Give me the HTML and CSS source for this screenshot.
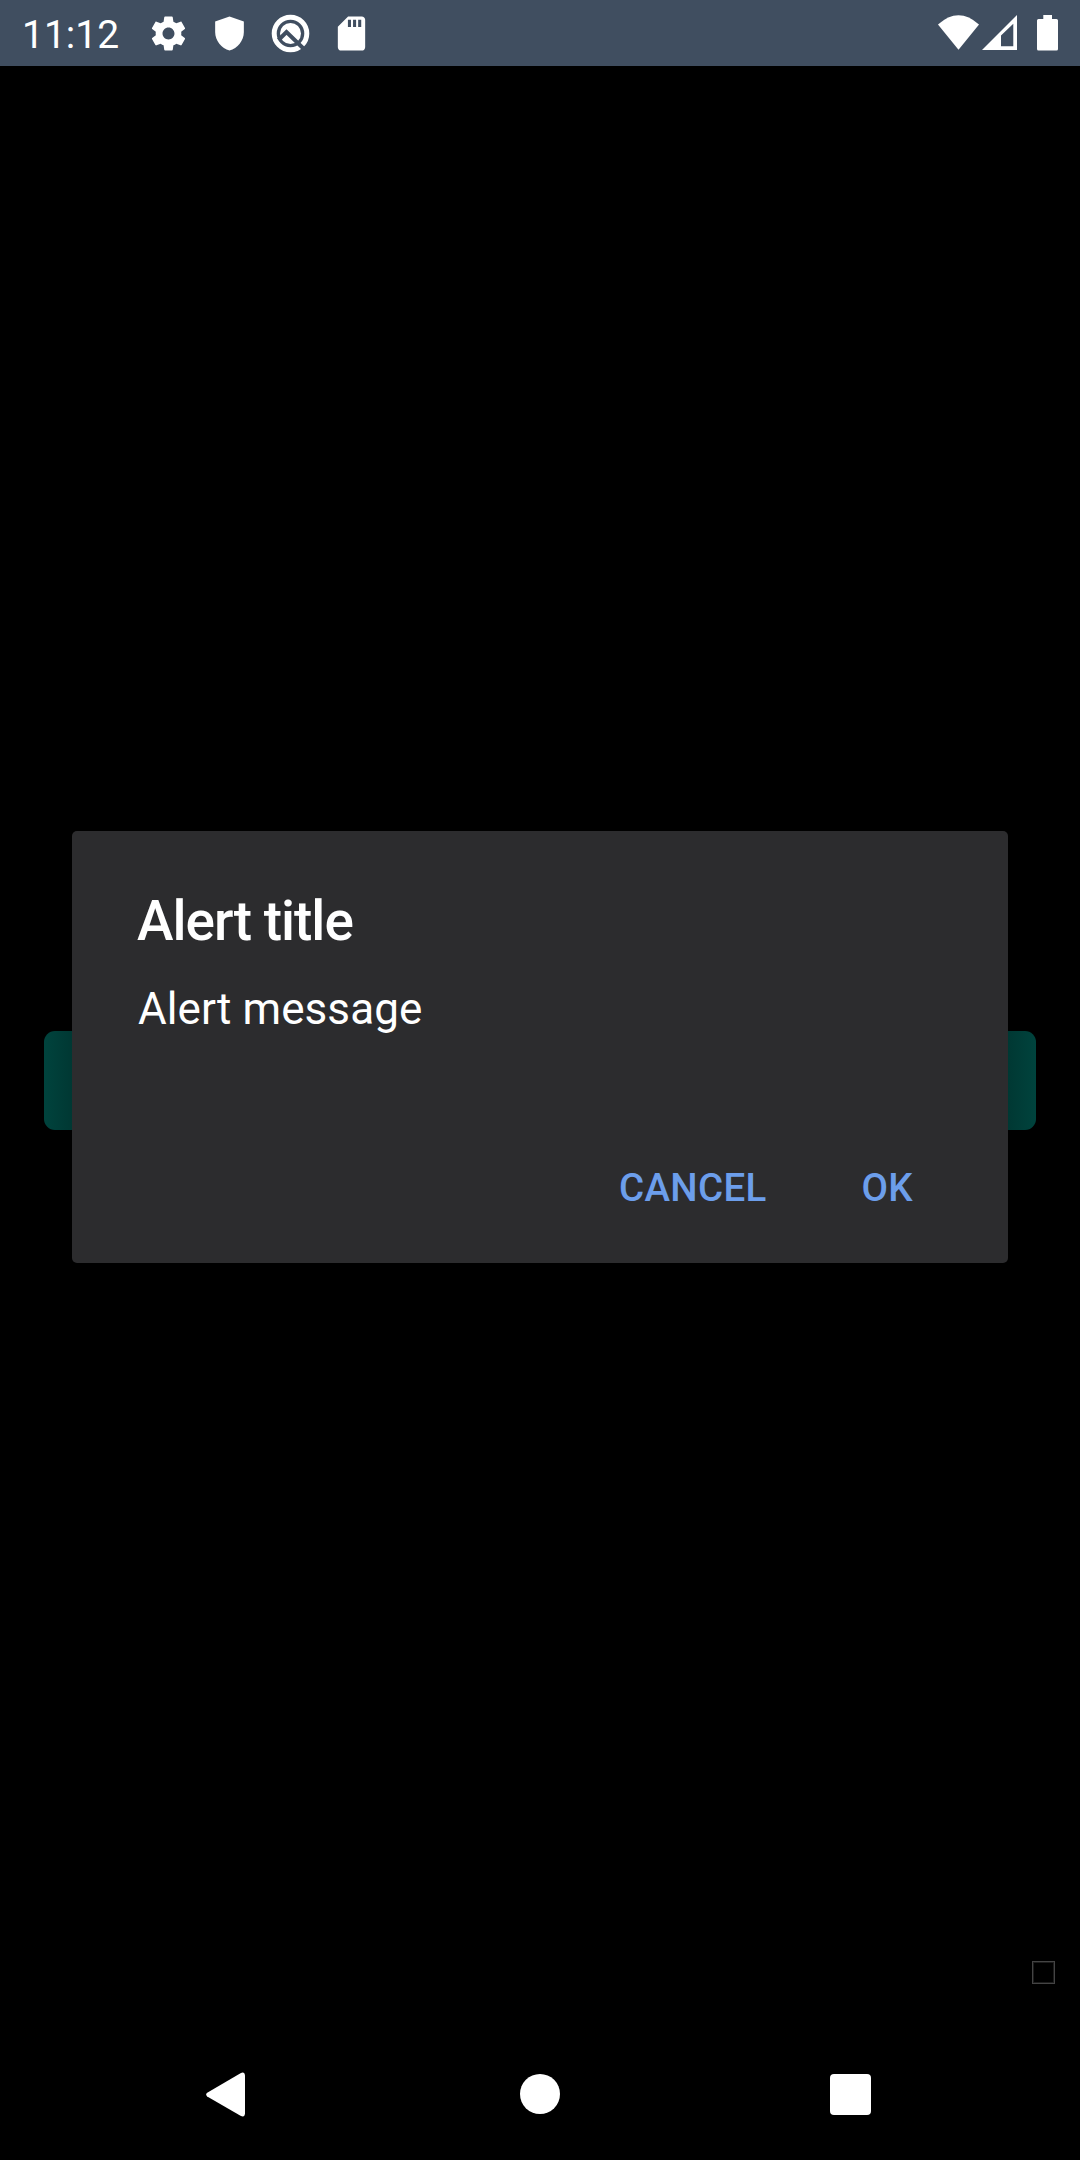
FILE: index.html
```html
<!DOCTYPE html>
<html lang="en">
<head>
<meta charset="utf-8">
<title>Alert</title>
<link rel="stylesheet" href="styles.css">
</head>
<body>
<div class="screen">
  <header class="status">
    <span class="clock">11:12</span>
    <div class="notifications">
      <svg class="note" viewBox="0 0 24 24"><path d="M19.43 12.98c.04-.32.07-.64.07-.98s-.03-.66-.07-.98l2.11-1.65c.19-.15.24-.42.12-.64l-2-3.46c-.12-.22-.39-.3-.61-.22l-2.49 1c-.52-.4-1.08-.73-1.69-.98l-.38-2.65C14.46 2.18 14.25 2 14 2h-4c-.25 0-.46.18-.49.42l-.38 2.65c-.61.25-1.17.59-1.69.98l-2.49-1c-.23-.09-.49 0-.61.22l-2 3.46c-.13.22-.07.49.12.64l2.11 1.65c-.04.32-.07.65-.07.98s.03.66.07.98l-2.11 1.65c-.19.15-.24.42-.12.64l2 3.46c.12.22.39.3.61.22l2.49-1c.52.4 1.08.73 1.69.98l.38 2.65c.03.24.24.42.49.42h4c.25 0 .46-.18.49-.42l.38-2.65c.61-.25 1.17-.59 1.69-.98l2.49 1c.23.09.49 0 .61-.22l2-3.46c.12-.22.07-.49-.12-.64l-2.11-1.65zM12 15.5c-1.93 0-3.5-1.57-3.5-3.5s1.57-3.5 3.5-3.5 3.5 1.57 3.5 3.5-1.57 3.5-3.5 3.5z"/></svg>
      <svg class="note" viewBox="0 0 24 24"><path d="M12 2 3.6 5v6.1c0 5 3.7 9.7 8.4 10.9 4.700-1.200 8.400-5.900 8.400-10.900V5z"/></svg>
      <svg class="note" viewBox="0 0 41 41">
        <circle class="ring" cx="20.500" cy="20.500" r="16.300"/>
        <circle cx="20.500" cy="20.500" r="10.500"/>
        <path class="cut" d="M8.500 27 16.500 19 35.500 37.500"/>
      </svg>
      <svg class="note" viewBox="0 0 24 24"><path d="M18 2h-8L4 8v12c0 1.100.9 2 2 2h12c1.100 0 2-.9 2-2V4c0-1.100-.9-2-2-2zm-6.300 6.200H9.900V4h1.800zm3 0h-1.800V4h1.800zm3 0h-1.800V4h1.800z"/></svg>
    </div>
    <div class="system">
      <svg class="wifi" viewBox="0 0 41 36"><path d="M0 9.500Q20.500-9 41 9.500L20.500 34.800z"/></svg>
      <svg class="signal" viewBox="0 0 35 36"><path fill-rule="evenodd" d="M0 35 35 0V35zM19 20.500V31.300H31.300V8.800z"/></svg>
      <svg class="battery" viewBox="0 0 21 36"><path d="M6.300 0h8.700v4H19.500Q21 4 21 5.500V34Q21 35.600 19.500 35.600H1.500Q0 35.600 0 34V5.500Q0 4 1.500 4H6.300z"/></svg>
    </div>
  </header>
  <main class="content">
    <div class="action"></div>
    <div class="overlay">
      <section class="dialog" role="alertdialog">
        <h1 class="title">Alert title</h1>
        <p class="message">Alert message</p>
        <div class="buttons">
          <span class="button">CANCEL</span>
          <span class="button">OK</span>
        </div>
      </section>
    </div>
    <div class="marker"></div>
  </main>
  <nav class="navbar">
    <svg class="nav back" viewBox="0 0 40 46"><path d="M1.200 20.800 34.500 1.200Q38.600-.8 39 3.500V41.500Q38.600 46 34.500 43.800L1.200 24.500Q-.8 22.500 1.200 20.800z"/></svg>
    <span class="nav home"></span>
    <span class="nav recents"></span>
  </nav>
</div>
</body>
</html>
```
FILE: styles.css
```css
body {
  margin: 0;
  background: #000;
  font-family: Roboto, "Liberation Sans", sans-serif;
  color: #fff;
}
.screen {
  display: flex;
  flex-direction: column;
  width: 1080px;
  height: 2160px;
}
svg {
  display: block;
  fill: #fff;
}
.status {
  display: flex;
  align-items: center;
  box-sizing: border-box;
  height: 66px;
  padding: 0 22px;
  background: #404e60;
}
.clock {
  width: 126px;
  font-size: 39px;
  line-height: 46px;
  padding-top: 4px;
}
.notifications {
  display: flex;
  gap: 20px;
}
.note {
  width: 41px;
  height: 41px;
}
.ring {
  fill: none;
  stroke: #fff;
  stroke-width: 5;
}
.cut {
  fill: none;
  stroke: #404e60;
  stroke-width: 4;
}
.system {
  display: flex;
  margin-left: auto;
}
.wifi { width: 41px; height: 36px; }
.signal { width: 35px; height: 36px; margin-left: 3px; }
.battery { width: 21px; height: 36px; margin-left: 20px; }
.content {
  position: relative;
  flex: 1;
  display: flex;
  flex-direction: column;
}
.action {
  height: 99px;
  margin: 965px 44px 0;
  border-radius: 11px;
  background: linear-gradient(90deg, #00433d, #003833 28px, #003833 964px, #00433d);
}
.overlay {
  position: absolute;
  inset: 765px 72px auto;
}
.dialog {
  display: flex;
  flex-direction: column;
  box-sizing: border-box;
  height: 432px;
  padding: 58px 66px 0;
  border-radius: 5px;
  background: #2c2c2e;
}
.title {
  margin: 0 0 0 -1px;
  font-size: 55px;
  font-weight: 500;
  line-height: 64px;
  letter-spacing: -1px;
}
.message {
  margin: 30px 0 0;
  font-size: 44px;
  line-height: 52px;
  letter-spacing: 0.080px;
}
.buttons {
  display: flex;
  justify-content: flex-end;
  gap: 95px;
  margin-top: 130px;
  padding-right: 29px;
}
.button {
  font-size: 38.500px;
  font-weight: 500;
  line-height: 45px;
  letter-spacing: 0.300px;
  color: #6c9eeb;
}
.marker {
  box-sizing: border-box;
  width: 23px;
  height: 23px;
  margin: auto 25px 44px auto;
  border: 1px solid #444;
  box-shadow: inset 0 0 0 1px #1c1c1c;
}
.navbar {
  display: flex;
  align-items: center;
  box-sizing: border-box;
  height: 132px;
  padding: 1px 0 0 206px;
}
.back { width: 40px; height: 46px; }
.home { width: 40px; height: 40px; margin: 0 0 1px 274px; border-radius: 50%; background: #fff; }
.recents { width: 41px; height: 41px; margin-left: 270px; border-radius: 4px; background: #fff; }
```
